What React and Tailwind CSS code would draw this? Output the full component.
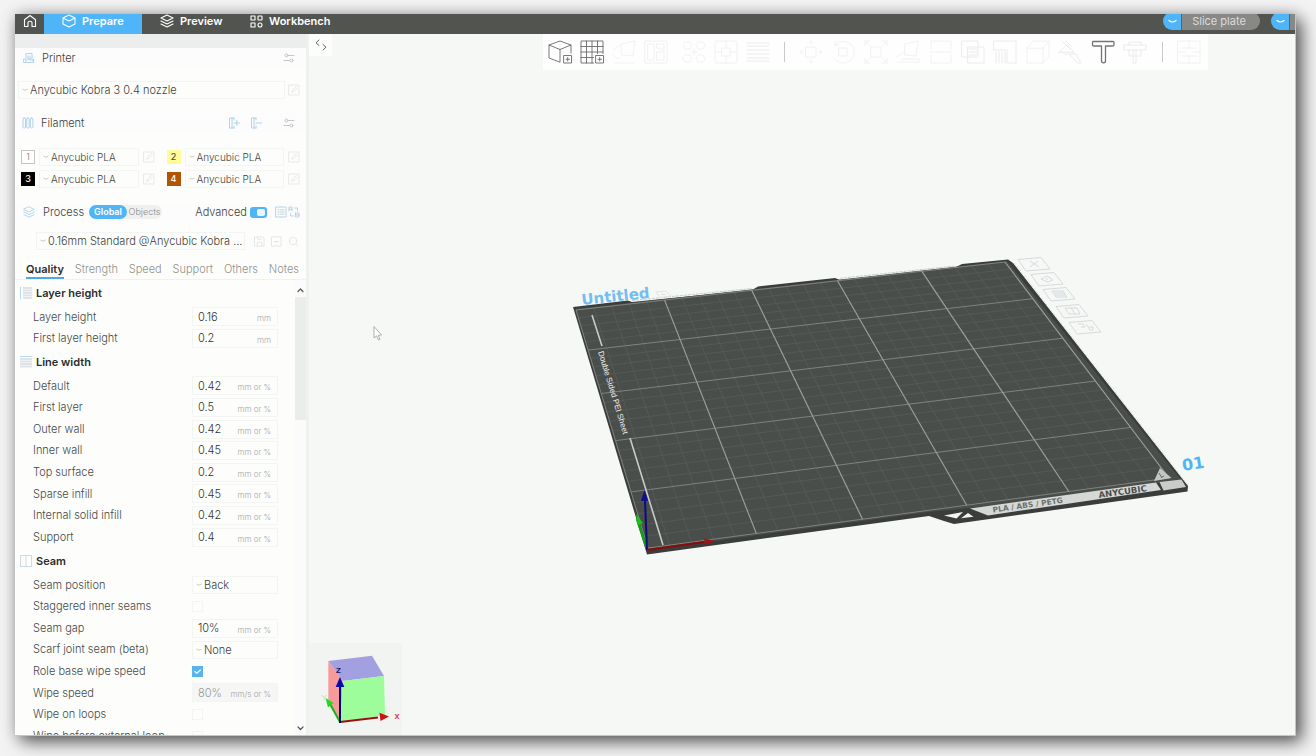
import React from "react";

const BLUE = "#4fb5f7";

function Svg({ size = 12, box = 24, className = "", sw = 1.5, children }) {
  return (
    <svg
      width={size}
      height={size}
      viewBox={`0 0 ${box} ${box}`}
      fill="none"
      stroke="currentColor"
      strokeWidth={sw}
      strokeLinecap="round"
      strokeLinejoin="round"
      className={`shrink-0 ${className}`}
      aria-hidden="true"
    >
      {children}
    </svg>
  );
}

/* ---------- title bar ---------- */

function TitleTab({ label, active, width, children }) {
  return (
    <button
      type="button"
      className={`flex h-full items-center gap-[6px] pl-[18px] text-[11px] font-semibold text-white ${width} ${
        active ? "bg-[#4fb5f9]" : ""
      }`}
    >
      {children}
      {label}
    </button>
  );
}

function MenuCap({ label }) {
  return (
    <button
      type="button"
      aria-label={label}
      className="flex h-[18px] w-[19px] items-center justify-center rounded-l-full border-r border-[#2f6fa5] bg-[#4fb5f9] text-white"
    >
      <Svg size={9} box={9} sw={1.2}>
        <path d="M1 3.500 Q4.500 6.500 8 3.500" />
      </Svg>
    </button>
  );
}

function TitleBar() {
  return (
    <header className="flex h-5 shrink-0 items-end overflow-hidden bg-[#525450]">
      <div className="flex h-[26px] w-full shrink-0 items-center">
        <button type="button" aria-label="Home" className="flex h-full w-[29px] items-center justify-center text-white">
          <Svg size={14} box={14} sw={1.1}>
            <path d="M1.500 5.800 L7 1.500 L12.500 5.800 V12.500 H9 V8.500 Q9 7.200 7 7.200 Q5 7.200 5 8.500 V12.500 H1.500 Z" />
          </Svg>
        </button>
        <TitleTab label="Prepare" active width="w-[98px]">
          <Svg size={14} box={14} sw={1.1}>
            <path d="M7 1 L13 4 V10 L7 13 L1 10 V4 Z M1 4 L7 7 L13 4" />
          </Svg>
        </TitleTab>
        <TitleTab label="Preview" width="w-[90px]">
          <Svg size={14} box={14} sw={1.1}>
            <path d="M7 1 L13 4 L7 7 L1 4 Z M1 7 L7 10 L13 7 M1 10 L7 13 L13 10" />
          </Svg>
        </TitleTab>
        <TitleTab label="Workbench" width="w-[110px]">
          <Svg size={13} box={13} sw={1.1}>
            <rect x="1" y="1" width="4" height="4" />
            <rect x="8" y="1" width="4" height="4" rx="0.500" />
            <rect x="1" y="8" width="4" height="4" />
            <rect x="8" y="8" width="4" height="4" rx="2" />
          </Svg>
        </TitleTab>
        <div className="ml-auto flex items-center">
          <MenuCap label="Slice options" />
          <button type="button" className="h-[18px] w-[78px] rounded-r-full bg-[#888986] pr-1 text-[11px] leading-[18px] text-[#dcdcda]">
            Slice plate
          </button>
          <span className="w-[11px]" />
          <MenuCap label="Print options" />
          <span className="h-[18px] w-[5px] bg-[#888986]" />
        </div>
      </div>
    </header>
  );
}

/* ---------- sidebar pieces ---------- */

function Sliders() {
  return (
    <Svg size={12} box={12} sw={1} className="text-[#c3c7c6]">
      <circle cx="3.500" cy="3.500" r="1.500" />
      <path d="M5.500 3.500 H11 M1 8.500 H6.500" />
      <circle cx="8.500" cy="8.500" r="1.500" />
    </Svg>
  );
}

function EditButton({ label }) {
  return (
    <button type="button" aria-label={label} className="text-[#e6e9e8]">
      <Svg size={12} box={12} sw={1}>
        <rect x="1" y="1" width="10" height="10" />
        <path d="M4 8 L4.500 6 L8.500 2.500 M4 8 L6 7.500 L9 4.500" />
      </Svg>
    </button>
  );
}

function DropDown({ id, label, value, className, textClass = "text-[11px]", pad = "pl-[11px]" }) {
  return (
    <div className={`relative flex h-[18px] ${className}`}>
      <select
        id={id}
        aria-label={label}
        defaultValue={value}
        className={`block h-[18px] w-full appearance-none border border-[#f3f5f3] bg-transparent text-[#3c3e3d] outline-none ${textClass} ${pad}`}
      >
        <option>{value}</option>
      </select>
      <svg width="6" height="4" viewBox="0 0 6 4" className="pointer-events-none absolute top-[7px] left-[4px]" fill="none" stroke="#c9cccb">
        <path d="M0.500 1 Q3 3.500 5.500 1" />
      </svg>
    </div>
  );
}

const FILAMENTS = [
  { n: 1, swatch: "border border-[#c5c5c2] bg-white text-[#777]" },
  { n: 2, swatch: "bg-[#fdfb9a] text-[#55552a] font-medium" },
  { n: 3, swatch: "bg-black text-white font-medium" },
  { n: 4, swatch: "bg-[#b25405] text-white font-medium" },
];

function Filament({ n, swatch }) {
  return (
    <div className="flex items-center">
      <span className={`flex h-[14px] w-[14px] shrink-0 items-center justify-center text-[9px] ${swatch}`}>{n}</span>
      <DropDown
        label={`Filament ${n}`}
        value="Anycubic PLA"
        className="ml-[4px] min-w-0 flex-1"
        textClass="text-[10px]"
      />
      <span className="w-[4px]" />
      <EditButton label={`Edit filament ${n}`} />
    </div>
  );
}

function Field({ id, label, value, unit, kind = "text", disabled }) {
  return (
    <div className="flex items-center pr-[17px] pl-[18px]">
      <label htmlFor={id} className="flex-1 text-[11px] whitespace-nowrap text-[#464847]">
        {label}
      </label>
      <div className="flex w-[86px] items-center">
        {kind === "text" && (
          <div className={`flex h-[19px] w-full items-center border border-[#f3f5f3] pr-[6px] pl-[5px] ${disabled ? "bg-[#f5f6f5]" : ""}`}>
            <input
              id={id}
              type="text"
              defaultValue={value}
              disabled={disabled}
              className={`w-0 flex-1 bg-transparent text-[11px] outline-none ${disabled ? "text-[#959796]" : "text-[#2f3130]"}`}
            />
            <span className="pt-[3px] text-[8px] leading-[12px] text-[#a2a5a4]">{unit}</span>
          </div>
        )}
        {kind === "select" && <DropDown id={id} value={value} className="w-full" />}
        {kind === "check" && (
          <span className="relative flex">
            <input
              id={id}
              type="checkbox"
              defaultChecked={value}
              className="h-[11px] w-[11px] appearance-none border border-[#f3f5f3] checked:border-[#58b4ee] checked:bg-[#58b4ee]"
            />
            {value && (
              <svg width="11" height="11" viewBox="0 0 11 11" className="pointer-events-none absolute inset-0" fill="none" stroke="#fff" strokeWidth="1.200">
                <path d="M2.500 5.200 L4.800 7.300 L8.700 3.800" />
              </svg>
            )}
          </span>
        )}
      </div>
    </div>
  );
}

function Section({ title, icon, fields, rowsClass }) {
  return (
    <section>
      <h3 className="flex h-[26px] items-center gap-[4px] pl-[5px] text-[11px] font-semibold text-[#2b2d2c]">
        <svg width="12" height="12" viewBox="0 0 12 12" fill="none" aria-hidden="true">
          {icon}
        </svg>
        {title}
      </h3>
      <div className={`grid ${rowsClass}`}>
        {fields.map((f) => (
          <Field key={f.id} {...f} />
        ))}
      </div>
    </section>
  );
}

const LAYER = [
  { id: "layer-height", label: "Layer height", value: "0.16", unit: "mm" },
  { id: "first-layer-height", label: "First layer height", value: "0.2", unit: "mm" },
];

const WIDTHS = [
  { id: "lw-default", label: "Default", value: "0.42", unit: "mm or %" },
  { id: "lw-first", label: "First layer", value: "0.5", unit: "mm or %" },
  { id: "lw-outer", label: "Outer wall", value: "0.42", unit: "mm or %" },
  { id: "lw-inner", label: "Inner wall", value: "0.45", unit: "mm or %" },
  { id: "lw-top", label: "Top surface", value: "0.2", unit: "mm or %" },
  { id: "lw-sparse", label: "Sparse infill", value: "0.45", unit: "mm or %" },
  { id: "lw-solid", label: "Internal solid infill", value: "0.42", unit: "mm or %" },
  { id: "lw-support", label: "Support", value: "0.4", unit: "mm or %" },
];

const SEAM = [
  { id: "seam-position", label: "Seam position", value: "Back", kind: "select" },
  { id: "seam-staggered", label: "Staggered inner seams", value: false, kind: "check" },
  { id: "seam-gap", label: "Seam gap", value: "10%", unit: "mm or %" },
  { id: "seam-scarf", label: "Scarf joint seam (beta)", value: "None", kind: "select" },
  { id: "seam-role", label: "Role base wipe speed", value: true, kind: "check" },
  { id: "seam-wipe-speed", label: "Wipe speed", value: "80%", unit: "mm/s or %", disabled: true },
  { id: "seam-wipe-loops", label: "Wipe on loops", value: false, kind: "check" },
  { id: "seam-wipe-before", label: "Wipe before external loop", value: false, kind: "check" },
];

const TABS = ["Quality", "Strength", "Speed", "Support", "Others", "Notes"];

function Sidebar() {
  return (
    <aside className="flex w-[294px] shrink-0 flex-col border-r-[3px] border-[#eff1ef] bg-[#fdfefc] font-light">
      <div className="h-[14px] shrink-0 bg-[#eceeed]" />

      <div className="flex h-5 shrink-0 items-center bg-[#fbfcfb] pr-[11px] pl-[8px]">
        <Svg size={12} box={12} sw={0.9} className="text-[#a9cfe8]">
          <path d="M3 6 V1.500 H9 V6 M1 7 H3 V10.500 H1 Z M4 10.500 H10.500 V7 H4.500 M5 4 V7 M7 4 V8.500 M9 8.500 H11" />
        </Svg>
        <h2 className="ml-[7px] flex-1 text-[11px] text-[#3c3e3d]">Printer</h2>
        <button type="button" aria-label="Printer settings">
          <Sliders />
        </button>
      </div>

      <div className="mt-[13px] flex h-[18px] shrink-0 items-center pr-[6px] pl-[3px]">
        <DropDown label="Printer model" value="Anycubic Kobra 3 0.4 nozzle" className="flex-1" />
        <span className="w-[3px]" />
        <EditButton label="Edit printer" />
      </div>

      <div className="mt-[14px] flex h-5 shrink-0 items-center bg-[#fbfcfb] pr-[11px] pl-[7px]">
        <Svg size={12} box={12} sw={0.9} className="text-[#a9cfe8]">
          <rect x="1" y="1" width="2.500" height="10" rx="1" />
          <rect x="4.700" y="1" width="2.500" height="10" rx="1" />
          <rect x="8.400" y="1" width="2.500" height="10" rx="1" />
        </Svg>
        <h2 className="ml-[7px] flex-1 text-[11px] text-[#3c3e3d]">Filament</h2>
        <button type="button" aria-label="Add filament" className="text-[#a9cfe8]">
          <Svg size={12} box={12} sw={0.9}>
            <path d="M6 1 H1.500 V11 H6 M4 1 V11 M6 1 V3 M6 9 V11 M6 6 H11.500 M8.800 3.300 V8.700" />
          </Svg>
        </button>
        <button type="button" aria-label="Remove filament" className="ml-[10px] text-[#a9cfe8]">
          <Svg size={12} box={12} sw={0.9}>
            <path d="M6 1 H1.500 V11 H6 M4 1 V11 M6 1 V3 M6 9 V11 M6 6 H11.500" />
          </Svg>
        </button>
        <button type="button" aria-label="Filament settings" className="ml-[21px]">
          <Sliders />
        </button>
      </div>

      <div className="mt-[13px] grid shrink-0 auto-rows-[22px] grid-cols-2 gap-x-[12px] pr-[6px] pl-[6px]">
        {FILAMENTS.map((f) => (
          <Filament key={f.n} {...f} />
        ))}
      </div>

      <div className="mt-[12px] flex h-5 shrink-0 items-center bg-[#fbfcfb] pr-[6px] pl-[8px]">
        <Svg size={12} box={14} sw={1} className="text-[#a9cfe8]">
          <path d="M7 1 L13 4 L7 7 L1 4 Z M1 7 L7 10 L13 7 M1 10 L7 13 L13 10" />
        </Svg>
        <h2 className="ml-[8px] w-[46px] text-[11px] text-[#3c3e3d]">Process</h2>
        <div className="flex h-[14px] items-center rounded-full bg-[#eff0ef] text-[9px]">
          <button type="button" aria-pressed="true" className="h-[14px] w-[38px] rounded-full bg-[#4fb5f7] leading-[14px] font-semibold text-white">
            Global
          </button>
          <button type="button" aria-pressed="false" className="h-[14px] w-[35px] leading-[14px] text-[#8a8c8b]">
            Objects
          </button>
        </div>
        <label htmlFor="advanced" className="ml-auto text-[11px] text-[#3c3e3d]">
          Advanced
        </label>
        <input
          id="advanced"
          type="checkbox"
          role="switch"
          defaultChecked
          className="relative ml-[3px] h-[11px] w-[17px] appearance-none rounded-[3px] bg-[#4fb5f7] before:absolute before:top-[2px] before:right-[2px] before:h-[7px] before:w-[8px] before:rounded-[2px] before:bg-[#eaf6fe]"
        />
        <button type="button" aria-label="Parameter list" className="ml-[8px] text-[#b5cfdf]">
          <Svg size={12} box={12} sw={0.9}>
            <rect x="1" y="1" width="10" height="10" />
            <path d="M3 3.800 H4 M5.500 3.800 H9 M3 6 H4 M5.500 6 H9 M3 8.200 H4 M5.500 8.200 H9" />
          </Svg>
        </button>
        <button type="button" aria-label="Compare presets" className="ml-px text-[#b5cfdf]">
          <Svg size={12} box={12} sw={0.9}>
            <path d="M1 5 V1 H4 V5 M1 3.300 H4 M7.500 7 V11 H11 V7 H7.500 M7.500 9 H11 M6.500 2 H9.500 V5 M5.500 10 H2.500 V7.500" />
          </Svg>
        </button>
      </div>

      <div className="mt-[10px] flex h-[18px] shrink-0 items-center gap-[6px] pr-[7px] pl-[21px] text-[#e2e5e4]">
        <DropDown label="Process preset" value="0.16mm Standard @Anycubic Kobra ..." className="min-w-0 flex-1" />
        <button type="button" aria-label="Save preset" className="ml-[3px]">
          <Svg size={11} box={12} sw={1}>
            <path d="M1 1 H9.500 L11 2.500 V11 H1 Z M3.500 11 V7 H8.500 V11 M4 1 V3.500 H8" />
          </Svg>
        </button>
        <button type="button" aria-label="Delete preset">
          <Svg size={11} box={12} sw={1}>
            <path d="M1 1 H11 V11 H1 Z M3.500 6 H8.500" />
          </Svg>
        </button>
        <button type="button" aria-label="Search settings">
          <Svg size={11} box={12} sw={1}>
            <circle cx="5.500" cy="5.500" r="4" />
            <path d="M8.500 8.500 L11 11" />
          </Svg>
        </button>
      </div>

      <nav className="mt-[10px] flex h-[20px] shrink-0 items-stretch justify-between border-b border-[#f0f2f0] pr-[7px] pl-[11px]">
        {TABS.map((t, i) => (
          <button
            key={t}
            type="button"
            className={`border-b-2 pt-px text-[11px] leading-[16px] ${
              i === 0 ? "border-[#4fa8e4] font-semibold text-[#2b2d2c]" : "border-transparent text-[#8f9190]"
            }`}
          >
            {t}
          </button>
        ))}
      </nav>

      <div className="flex min-h-0 flex-1 overflow-hidden">
        <div className="h-0 min-w-0 flex-1">
          <Section
            title="Layer height"
            rowsClass="h-[43px] grid-rows-2"
            fields={LAYER}
            icon={
              <>
                <path d="M0.500 0 V12" stroke="#b9d8ee" />
                <path d="M3 1 H12 M3 3.500 H12 M3 6 H12 M3 8.500 H12 M3 11 H12" stroke="#e0e3e6" strokeWidth="2" />
              </>
            }
          />
          <Section
            title="Line width"
            rowsClass="h-[173px] grid-rows-8"
            fields={WIDTHS}
            icon={
              <>
                <path d="M0 0.500 H12" stroke="#b9d8ee" />
                <path d="M0 3 H12 M0 5.500 H12 M0 8 H12 M0 10.500 H12" stroke="#e0e3e6" strokeWidth="2" />
              </>
            }
          />
          <Section
            title="Seam"
            rowsClass="h-[173px] grid-rows-8"
            fields={SEAM}
            icon={<path d="M0.500 0.500 H11.500 V11.500 H0.500 Z M6 0.500 V11.500" stroke="#ccdae4" />}
          />
        </div>
        <div className="flex w-[11px] shrink-0 flex-col items-center bg-[#fafbfa] text-[#555]">
          <Svg size={11} box={11} sw={1.2} className="mt-[5px]">
            <path d="M3 6.500 L5.500 4 L8 6.500" />
          </Svg>
          <div className="mt-[1px] h-[123px] w-full bg-[#ebedeb]" />
          <Svg size={11} box={11} sw={1.2} className="mt-auto mb-[1px]">
            <path d="M3 4 L5.500 6.500 L8 4" />
          </Svg>
        </div>
      </div>
    </aside>
  );
}

/* ---------- toolbar ---------- */

const TOOLS_A = [
  {
    name: "Add model",
    dark: true,
    art: "M11.500 22 L1 18 V5 L12 1 L23 5 V13 M1 5 L12 9.500 L23 5 M12 9.500 V22 M16 15.500 H23.500 V23 H16 Z M18 19.300 H21.500 M19.700 17.500 V21",
  },
  {
    name: "Add plate",
    dark: true,
    art: "M13.500 23 H1 V1 H23 V13.500 M6.500 1 V23 M12 1 V23 M17.500 1 V13.500 M1 6.500 H23 M1 12 H23 M1 17.500 H13.500 M16 15.500 H23.500 V23 H16 Z M18 19.300 H21.500 M19.700 17.500 V21",
  },
  { name: "Auto orient", art: "M9 4 L23 1 L21 16 L10 15 Z M1 10 L6 6 M1 14 Q3 20 8 18 M3 23 H22" },
  { name: "Arrange", art: "M1 1 H23 V23 H1 Z M4 4 H10 V20 H4 Z M13 4 H20 V10 L13 8 Z M13 12 H20 V20 H13 Z" },
];
const TOOLS_B = [
  { name: "Split to objects", art: "M3 2 H8 L10 5 L8 9 H3 L1 5 Z M16 2 H21 L23 5 L21 9 H16 L14 5 Z M3 15 H8 L10 19 L8 22 H3 L1 19 Z M16 15 H21 L23 19 L21 22 H16 L14 19 Z M12 9 V15 M9 12 H15" },
  { name: "Split to parts", art: "M1 3 Q1 1 3 1 H21 Q23 1 23 3 V21 Q23 23 21 23 H3 Q1 23 1 21 Z M12 1 V8 M12 16 V23 M1 12 H8 M16 12 H23 M8 8 H16 V16 H8 Z" },
  { name: "Variable layer height", strong: true, art: "M1 3 H23 M1 6 H23 M1 10 H23 M1 14 H23 M1 18 H23 M1 21 H23" },
];
const TOOLS_C = [
  { name: "Move", art: "M7 7 H17 V17 H7 Z M12 1 V4 M12 20 V23 M1 12 H4 M20 12 H23 M10 3 L12 1 L14 3 M10 21 L12 23 L14 21 M3 10 L1 12 L3 14 M21 10 L23 12 L21 14" },
  { name: "Rotate", art: "M8 8 H16 V16 H8 Z M4 5 A11 11 0 1 1 3 18 M4 5 V1 M4 5 H8" },
  { name: "Scale", art: "M7 7 H17 V17 H7 Z M1 6 V1 H6 M18 1 H23 V6 M23 18 V23 H18 M6 23 H1 V18 M1 1 L6 6 M23 1 L18 6 M23 23 L18 18 M1 23 L6 18" },
  { name: "Lay on face", art: "M9 4 L22 1 L20 16 L9 15 Z M1 17 L8 12 M1 22 H23 V19 H6" },
  { name: "Cut", art: "M2 9 V1 H22 V9 M2 15 V23 H22 V15 M1 12 H23" },
  { name: "Boolean", strong: true, art: "M1 1 H17 V17 H1 Z M7 7 H23 V23 H7 Z M8 9 H16 M8 12 H16 M8 15 H16" },
  { name: "Supports", strong: true, art: "M1 1 H23 V23 H14 V10 H1 Z M3 12 V23 M6 12 V23 M9 12 V23 M12 12 V23" },
  { name: "Seam painting", art: "M1 8 L7 1 H23 L17 8 Z M17 8 V23 H1 V8 M23 1 V16 L17 23" },
  { name: "Color painting", strong: true, art: "M4 1 L12 9 M8 1 L14 7 M1 12 L9 5 L16 12 Z M6 14 H18 L23 23 H20 L12 15" },
  { name: "Text", text: true },
  { name: "Measure", strong: true, art: "M1 5 H23 V10 H1 Z M6 10 V16 H18 V10 M10 10 V23 H13 V10 M6 5 V2 H18 V5" },
];
const TOOLS_D = [
  { name: "Assembly view", art: "M1 1 H23 V23 H1 Z M12 1 V8 M12 16 V23 M1 12 H8 M16 12 H23 M5 8 H19 M5 16 H19" },
];

function Tool({ name, dark, strong, text, art }) {
  const tone = dark ? "text-[#6a6c6b]" : text ? "text-[#737574]" : strong ? "text-[#e8eae9]" : "text-[#eef0ee]";
  return (
    <button type="button" aria-label={name} className={`flex h-full w-8 items-center justify-center ${tone}`}>
      <Svg size={24} box={24} sw={text ? 1.3 : 0.9}>
        {text ? (
          <path d="M2 1.500 H22 Q23 1.500 23 2.500 V4.500 Q23 6 21.500 6 H14.500 V21 Q14.500 22.800 12.500 22.800 Q10.500 22.800 10.500 21 V6 H3 Q1.500 6 1.500 4.500 V2.500 Q1.500 1.500 2 1.500 Z" />
        ) : (
          <path d={art} />
        )}
      </Svg>
    </button>
  );
}

function Divider({ width }) {
  return (
    <span className={`flex justify-center ${width}`}>
      <span className="h-5 w-px bg-[#c8cac8]" />
    </span>
  );
}

function Toolbar() {
  return (
    <div className="flex shrink-0 items-start">
      <button type="button" aria-label="Collapse sidebar" className="flex h-[22px] w-[23px] items-center justify-center bg-[#fcfdfc] text-[#666]">
        <Svg size={12} box={12} sw={1}>
          <path d="M4 1 L1 3.800 L4 6.500 M8 5.500 L11 8.200 L8 11" />
        </Svg>
      </button>
      <div role="toolbar" className="ml-[211px] flex h-9 items-center bg-[#fdfefd] pr-[3px] pl-[1px]">
        {TOOLS_A.map((t) => (
          <Tool key={t.name} {...t} />
        ))}
        <span className="w-[6px]" />
        {TOOLS_B.map((t) => (
          <Tool key={t.name} {...t} />
        ))}
        <Divider width="w-[21px]" />
        <div className="flex h-full w-[356px] justify-between">
          {TOOLS_C.map((t) => (
            <Tool key={t.name} {...t} />
          ))}
        </div>
        <Divider width="w-[22px]" />
        {TOOLS_D.map((t) => (
          <Tool key={t.name} {...t} />
        ))}
      </div>
    </div>
  );
}

/* ---------- 3D scene ---------- */

const CORNERS = [
  [576, 310],
  [1005, 262],
  [1169, 478],
  [648, 548],
];

/* Projects unit-square coordinates onto the perspective quad. */
function project(u, v) {
  const [[x0, y0], [x1, y1], [x2, y2], [x3, y3]] = CORNERS;
  const dx1 = x1 - x2, dx2 = x3 - x2, dx3 = x0 - x1 + x2 - x3;
  const dy1 = y1 - y2, dy2 = y3 - y2, dy3 = y0 - y1 + y2 - y3;
  const det = dx1 * dy2 - dx2 * dy1;
  const g = (dx3 * dy2 - dx2 * dy3) / det;
  const h = (dx1 * dy3 - dx3 * dy1) / det;
  const w = g * u + h * v + 1;
  return [
    ((x1 - x0 + g * x1) * u + (x3 - x0 + h * x3) * v + x0) / w,
    ((y1 - y0 + g * y1) * u + (y3 - y0 + h * y3) * v + y0) / w,
  ];
}

function segment(a, b) {
  const [p, q] = [project(...a), project(...b)];
  return `M${p[0].toFixed(1)} ${p[1].toFixed(1)} L${q[0].toFixed(1)} ${q[1].toFixed(1)}`;
}

const STEPS = Array.from({ length: 26 }, (_, i) => i);
const MINOR = STEPS.filter((i) => i % 5)
  .map((i) => segment([i / 25, 0], [i / 25, 1]) + segment([0, i / 25], [1, i / 25]))
  .join("");
const MAJOR_V = [1, 2, 3, 4, 5].map((i) => segment([i / 5, 0], [i / 5, 1])).join("");
const MAJOR_H = [0, 1, 2, 3, 4, 5].map((i) => segment([0, i / 5], [1, i / 5])).join("") + segment([0, 0], [0, 1]);

const PLATE_ICONS = [
  { x: 1034, y: 264, d: "M-4 -3 L5 3 M4 -3 L-4 3" },
  { x: 1047, y: 279, d: "M-6 0 L0 -3 L6 1 L1 3 Z M-1 0 H1" },
  { x: 1059, y: 294, d: "M-7 -3 H4 L8 3 H-3 Z M-5 -1 H5 M-4 1 H6" },
  { x: 1072, y: 311, d: "M-7 -3 H5 L8 3 H-3 Z M-1 -3 L3 3" },
  { x: 1085, y: 327, d: "M-7 -3 H-2 L0 0 H-4 M1 -3 L5 3 M4 0 H8 V3 H5" },
];

function Scene() {
  return (
    <svg viewBox="309 70 986 665" className="min-h-0 w-full flex-1" role="img" aria-label="Build plate">
      {/* plate body */}
      <path
        d="M573 307 L628 300.500 L632 302 L752 290 L758 286.500 L835 278 L840 280 L955 267.500 L962 264 L1008 259.500 L1013 263 L1188 486 L1187.500 491.500 L954 524 L944 521 L929 516 L647 554.500 Z"
        fill="#3a3d3b"
      />
      <path d="M575 309 L1007 261 L1181 480 L970 508 L929 512 L648 550 Z" fill="#4a4e4b" />
      <path d="M632 300.500 L752 288.500" stroke="#c9cccb" strokeDasharray="3 1" />
      <path d="M840 278.300 L955 266" stroke="#c9cccb" strokeDasharray="3 1" />
      <path d="M1014 263 L1188 485" stroke="#d8dbd9" strokeDasharray="2 2" />
      <path d={MINOR} stroke="#5a5e5b" strokeWidth="0.700" />
      <path d={MAJOR_H} stroke="#858986" strokeWidth="0.900" />
      <path d={MAJOR_V} stroke="#9a9e9b" strokeWidth="1.200" />
      <path d="M592 315 L602 346 M630 438 L663 545" stroke="#c8cbc9" strokeWidth="1.600" />

      {/* front label strip */}
      <path d="M970 508.500 L1156 482.500 L1161 490 L988 515.500 Z" fill="#d5d8d5" />
      <path d="M1159.500 482 L1181.500 479.500 L1186 487 L1163.500 490.500 Z" fill="#c9ccc9" />
      <path d="M1160 468 L1171.500 478 L1154 481 Z" fill="#c3c6c3" />
      <path d="M1159 473 L1162 478 M1161 477.500 L1164 476" stroke="#6a6d6b" />
      <path d="M944 515.500 L963 512 L956.500 518.500 Z M968 513 L973.500 516.800 L961 518.300 Z" fill="#f2f4f2" />
      <text transform="translate(993 512.500) rotate(-8)" fontFamily="DejaVu Sans, sans-serif" fontSize="7.500" fontWeight="bold" fill="#6c6f6d">
        PLA / ABS / PETG
      </text>
      <text transform="translate(1099 498) rotate(-8)" fontFamily="DejaVu Sans, sans-serif" fontSize="8.500" fontWeight="bold" fill="#4d504e">
        ANYCUBIC
      </text>
      <text transform="translate(598 352) rotate(73)" fontFamily="Liberation Sans, sans-serif" fontSize="8" fill="#eef1ef">
        Double Sided PEI Sheet
      </text>
      <text transform="translate(582 305) rotate(-6)" fontFamily="DejaVu Sans, sans-serif" fontSize="15" fontWeight="bold" fill="#74bdf0">
        Untitled
      </text>
      <path d="M656 292 L666 291 L671 296 L660 297.500 Z M661 294.500 H666" stroke="#e1e4e2" fill="none" />
      <text transform="translate(1183 471) rotate(-9)" fontFamily="DejaVu Sans, sans-serif" fontSize="16" fontWeight="bold" fill={BLUE}>
        01
      </text>

      {/* plate actions */}
      {PLATE_ICONS.map((p) => (
        <g key={p.y} transform={`translate(${p.x} ${p.y})`} fill="none" stroke="#d3d6d8" strokeWidth="0.900">
          <path d="M-16 -4.500 L7 -6.500 L16 5 L-8 7 Z" />
          <path d={p.d} />
        </g>
      ))}

      {/* origin axes */}
      <path d="M647 549 L637 519" stroke="#12a012" strokeWidth="2.500" />
      <path d="M636 514 L643 523 L637.500 525 Z" fill="#18c418" />
      <path d="M647 550 L645 500" stroke="#0c0c80" strokeWidth="2" />
      <path d="M644.500 490 L648 501 L641 501 Z" fill="#10108c" />
      <path d="M647 550 L704 542" stroke="#8b0a0a" strokeWidth="2.200" />
      <path d="M715 540.800 L704 538.500 L705 545 Z" fill="#a01414" />

      {/* pointer */}
      <path d="M374 326.500 V338 L376.500 335.800 L378.500 340 L380 339.300 L378.300 335.300 L381.500 335 Z" fill="#fff" stroke="#9a9c9b" strokeWidth="0.800" />

      {/* view cube */}
      <rect x="309" y="643" width="93" height="92" fill="#f2f4f2" />
      <path d="M328.300 661 L372 655.700 L384 676 L342.700 681 Z" fill="#a3a0e2" />
      <path d="M328.300 661 L342.700 681 L340.700 722 L328.300 700 Z" fill="#f79a9a" />
      <path d="M342.700 681 L384 676 L385 715 L340.700 722 Z" fill="#9dfd9b" />
      <path d="M340 722 L330 704" stroke="#17b517" strokeWidth="2" />
      <path d="M325.500 698 L333.500 703 L328 707.500 Z" fill="#22d822" />
      <path d="M340 722 L378 717.500" stroke="#9a1010" strokeWidth="2" />
      <path d="M389 716.500 L379.500 712.800 L380.500 721 Z" fill="#d01010" />
      <path d="M340 723 V686" stroke="#08087e" strokeWidth="2" />
      <path d="M340 677 L344.300 687 H335.700 Z" fill="#0808b0" />
      <text x="336" y="673" fontFamily="Liberation Sans, sans-serif" fontSize="8" fontWeight="bold" fill="#15155e">
        Z
      </text>
      <text x="394.500" y="719" fontFamily="Liberation Sans, sans-serif" fontSize="9" fontWeight="bold" fill="#d9455a">
        x
      </text>
      <text x="321.500" y="700" fontFamily="Liberation Sans, sans-serif" fontSize="8" fill="#a5f0a5">
        Y
      </text>
    </svg>
  );
}

export default function App() {
  return (
    <div className="h-screen overflow-hidden bg-[#f3f3f3] pt-[14px] pr-[20px] pb-[20px] pl-[15px] font-['Inter','Liberation_Sans',sans-serif]">
      <div className="flex h-full flex-col overflow-hidden border-r border-b border-[#c4c5c4] bg-[#f6f8f6] shadow-[6px_6px_16px_rgba(0,0,0,0.6),0_0_14px_rgba(0,0,0,0.18)]">
        <TitleBar />
        <div className="flex min-h-0 flex-1">
          <Sidebar />
          <main className="flex min-w-0 flex-1 flex-col">
            <Toolbar />
            <Scene />
          </main>
        </div>
      </div>
    </div>
  );
}
